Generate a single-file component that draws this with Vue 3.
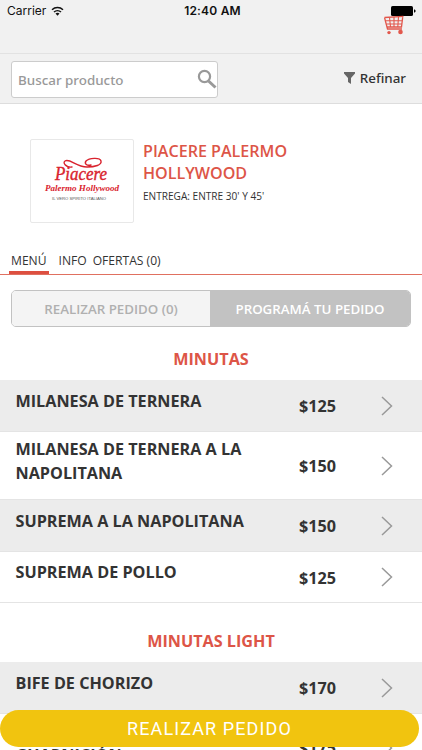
<script setup>
import { ref } from 'vue'

const search = ref('')

const tabs = ['MENÚ', 'INFO', 'OFERTAS (0)']
const activeTab = ref('MENÚ')

const sections = [
  {
    title: 'MINUTAS',
    items: [
      { name: 'MILANESA DE TERNERA', price: 125 },
      { name: 'MILANESA DE TERNERA A LA NAPOLITANA', price: 150 },
      { name: 'SUPREMA A LA NAPOLITANA', price: 150 },
      { name: 'SUPREMA DE POLLO', price: 125 }
    ]
  },
  {
    title: 'MINUTAS LIGHT',
    items: [
      { name: 'BIFE DE CHORIZO', price: 170 },
      { name: 'BIFE DE CHORIZO CON GUARNICIÓN', price: 175 }
    ]
  }
]
</script>

<template>
  <div class="screen">
    <header class="topbar">
      <div class="status">
        <div class="carrier">
          <span>Carrier</span>
          <svg class="wifi" viewBox="0 0 13 10">
            <path d="M1 3.8a8 8 0 0 1 11 0M3 6a5.2 5.2 0 0 1 7 0" fill="none" stroke="#111" stroke-width="1.5" />
            <path d="M4.5 7.6a3 3 0 0 1 4 0L6.5 9.7z" fill="#111" />
          </svg>
        </div>
        <span class="clock">12:40 AM</span>
        <svg class="battery" viewBox="0 0 25 10">
          <rect width="22" height="10" rx="1.6" />
          <path d="M23 3.3q1.7.4 1.7 1.7t-1.7 1.7z" />
        </svg>
      </div>
      <svg class="cart" viewBox="0 0 20 20">
        <path d="M.5 2.5 3.5 14H18M18.8 1.3 17.5 12H3M.5 2.5 19.5 1.3" fill="none" stroke="#e2574c" stroke-width="1.3" />
        <path d="M5.5 2.3 6.5 12M10 2v10M14.5 1.8 13.8 12M1.7 5.8H18.2M2.5 9H18" fill="none" stroke="#e2574c" stroke-width="1.1" />
        <circle cx="5" cy="17.6" r="1.7" fill="#e2574c" />
        <circle cx="16.5" cy="17" r="2.3" fill="#e2574c" />
      </svg>
    </header>

    <div class="searchbar">
      <label class="search-box">
        <input v-model="search" type="text" placeholder="Buscar producto" />
        <svg class="lens" viewBox="0 0 20 20">
          <circle cx="7.5" cy="7.5" r="5.6" fill="none" stroke="#999" stroke-width="2.2" />
          <path d="M11.5 12l7 6.5" fill="none" stroke="#999" stroke-width="3" />
        </svg>
      </label>
      <button class="refine">
        <svg class="funnel" viewBox="0 0 11 12">
          <path d="M0 0h11v1.5L7 6v6L4 10V6L0 1.5z" fill="#666" />
        </svg>
        <span>Refinar</span>
      </button>
    </div>

    <section class="restaurant">
      <div class="logo">
        <svg viewBox="0 0 102 82">
          <path
            d="M41 27C36 28 31 23 34 21c5-3 11 6 22 6 8 0 15-2 14-6-1-4-12-3-15 0-2 3 1 5 5 4"
            fill="none"
            stroke="#d9232e"
            stroke-width="1.4"
            stroke-linecap="round"
          />
          <text class="logo-main" x="24" y="40" textLength="52" lengthAdjust="spacingAndGlyphs">Piacere</text>
          <text class="logo-sub" x="14" y="51" textLength="74" lengthAdjust="spacingAndGlyphs">Palermo Hollywood</text>
          <text class="logo-tag" x="21" y="60" textLength="54" lengthAdjust="spacingAndGlyphs">IL VERO SPIRITO ITALIANO</text>
        </svg>
      </div>
      <div class="info">
        <h1>PIACERE PALERMO HOLLYWOOD</h1>
        <p>ENTREGA: ENTRE 30' Y 45'</p>
      </div>
    </section>

    <nav class="tabs">
      <button
        v-for="tab in tabs"
        :key="tab"
        class="tab"
        :class="{ active: tab === activeTab }"
        @click="activeTab = tab"
      >
        {{ tab }}
      </button>
    </nav>

    <div class="order-switch">
      <button class="order-now">REALIZAR PEDIDO (0)</button>
      <button class="order-later">PROGRAMÁ TU PEDIDO</button>
    </div>

    <section v-for="section in sections" :key="section.title" class="section">
      <h2>{{ section.title }}</h2>
      <ul>
        <li v-for="item in section.items" :key="item.name" class="item">
          <span class="name">{{ item.name }}</span>
          <span class="price">${{ item.price }}</span>
          <svg class="chevron" viewBox="0 0 12 20">
            <path d="M1 1l9.5 9L1 19" fill="none" stroke="#999" stroke-width="1.5" />
          </svg>
        </li>
      </ul>
    </section>

    <!-- Floating order button -->
    <button class="checkout">REALIZAR PEDIDO</button>
  </div>
</template>

<style>
body {
  margin: 0;
  overflow: hidden;
}
</style>

<style scoped>
.screen {
  position: relative;
  height: 750px;
  overflow: hidden;
  background: #fff;
  color: #333;
  font-family: 'Open Sans', 'Noto Sans', sans-serif;
}

button {
  padding: 0;
  border: none;
  background: none;
  font: inherit;
  color: inherit;
}

svg {
  display: block;
  flex: none;
}

.topbar {
  position: relative;
  box-sizing: border-box;
  height: 54px;
  background: #f1f1f1;
  border-bottom: 1px solid #e2e2e2;
}

.status {
  display: grid;
  grid-template-columns: 1fr auto 1fr;
  align-items: center;
  height: 21px;
  padding: 0 6px 0 7px;
  font-family: Inter, 'Liberation Sans', sans-serif;
  font-size: 12px;
  color: #111;
}

.carrier {
  display: flex;
  align-items: center;
  gap: 5px;
}

.wifi {
  width: 13px;
  height: 10px;
}

.clock {
  padding-left: 2px;
  font-weight: 600;
  letter-spacing: 0.2px;
}

.battery {
  justify-self: end;
  width: 25px;
  height: 10px;
  fill: #000;
}

.cart {
  position: absolute;
  top: 15px;
  right: 18px;
  width: 20px;
  height: 20px;
}

.searchbar {
  display: flex;
  align-items: center;
  justify-content: space-between;
  box-sizing: border-box;
  height: 50px;
  padding: 1px 16px 0 11px;
  background: #f1f1f1;
  border-bottom: 1px solid #ddd;
}

.search-box {
  display: flex;
  align-items: center;
  box-sizing: border-box;
  width: 207px;
  height: 37px;
  padding: 0 0 0 6px;
  background: #fff;
  border: 1px solid #ccc;
  border-radius: 3px;
}

.search-box input {
  flex: 1;
  min-width: 0;
  padding: 1px 0 0;
  border: none;
  outline: none;
  font-family: 'Noto Sans', sans-serif;
  font-size: 13.4px;
  font-weight: 500;
}

.search-box input::placeholder {
  color: #999;
}

.lens {
  width: 20px;
  height: 20px;
}

.refine {
  display: flex;
  align-items: center;
  gap: 5px;
  padding-bottom: 3px;
  font-family: 'Noto Sans', sans-serif;
  font-size: 13.4px;
  font-weight: 500;
}

.funnel {
  width: 11px;
  height: 12px;
}

.restaurant {
  display: flex;
  gap: 9px;
  height: 83px;
  padding: 35px 30px 0;
}

.logo {
  box-sizing: border-box;
  width: 104px;
  height: 84px;
  border: 1px solid #e8e8e8;
  border-radius: 2px;
}

.logo-main {
  font-family: 'Liberation Serif', serif;
  font-size: 18px;
  font-style: italic;
  fill: #d9232e;
  stroke: #d9232e;
  stroke-width: 0.4px;
}

.logo-sub {
  font-family: 'Liberation Serif', serif;
  font-size: 8.5px;
  font-style: italic;
  font-weight: bold;
  fill: #d9232e;
}

.logo-tag {
  font-family: 'Liberation Sans', sans-serif;
  font-size: 4px;
  fill: #555;
}

.info h1 {
  width: 180px;
  margin: 1px 0 0;
  font-size: 16.1px;
  font-weight: 600;
  line-height: 22px;
  color: #dd5547;
}

.info p {
  margin: 4px 0 0;
  font-size: 10.1px;
  line-height: 16px;
}

.tabs {
  display: flex;
  align-items: stretch;
  height: 25px;
  margin-top: 27px;
  padding-left: 9px;
  border-bottom: 1px solid #e07060;
}

.tab {
  box-sizing: border-box;
  margin-right: 6px;
  padding-bottom: 2px;
  font-size: 12.1px;
}

.tab.active {
  margin-right: 10px;
  padding: 1px 2px 0;
  border-bottom: 3px solid #dd4f40;
}

.order-switch {
  display: grid;
  grid-template-columns: 198px 1fr;
  box-sizing: border-box;
  height: 37px;
  margin: 15px 11px 0;
  overflow: hidden;
  border: 1px solid #c2c2c2;
  border-radius: 5px;
  font-size: 13.3px;
  font-weight: 600;
}

.order-now {
  background: #f4f4f4;
  color: #b0b0b0;
}

.order-later {
  background: #c2c2c2;
  color: #fff;
}

.section h2 {
  box-sizing: border-box;
  height: 53px;
  margin: 0;
  padding-top: 20px;
  font-size: 16.2px;
  font-weight: 700;
  line-height: 24px;
  text-align: center;
  color: #dd5547;
}

.section + .section h2 {
  height: 59px;
  padding-top: 26px;
}

.section ul {
  margin: 0;
  padding: 0;
  list-style: none;
}

.item {
  display: flex;
  align-items: center;
  box-sizing: border-box;
  min-height: 51px;
  padding: 3px 29px 3px 15.5px;
  border-bottom: 1px solid #e4e4e4;
  font-size: 16.2px;
  font-weight: 700;
}

.item:nth-child(odd) {
  min-height: 52px;
  background: #ececec;
}

.name {
  flex: none;
  width: 240px;
  margin-right: 43.5px;
  padding: 3px 0 11px;
  line-height: 23.5px;
}

.price {
  flex: 1;
  padding-top: 1px;
}

.chevron {
  width: 12px;
  height: 20px;
}

.checkout {
  position: absolute;
  bottom: 3px;
  left: 0;
  width: 419px;
  height: 37px;
  background: #f1c40f;
  border-radius: 19px;
  color: #fff;
  font-family: Roboto, sans-serif;
  font-size: 18px;
  font-weight: 400;
  letter-spacing: 1.1px;
}
</style>
